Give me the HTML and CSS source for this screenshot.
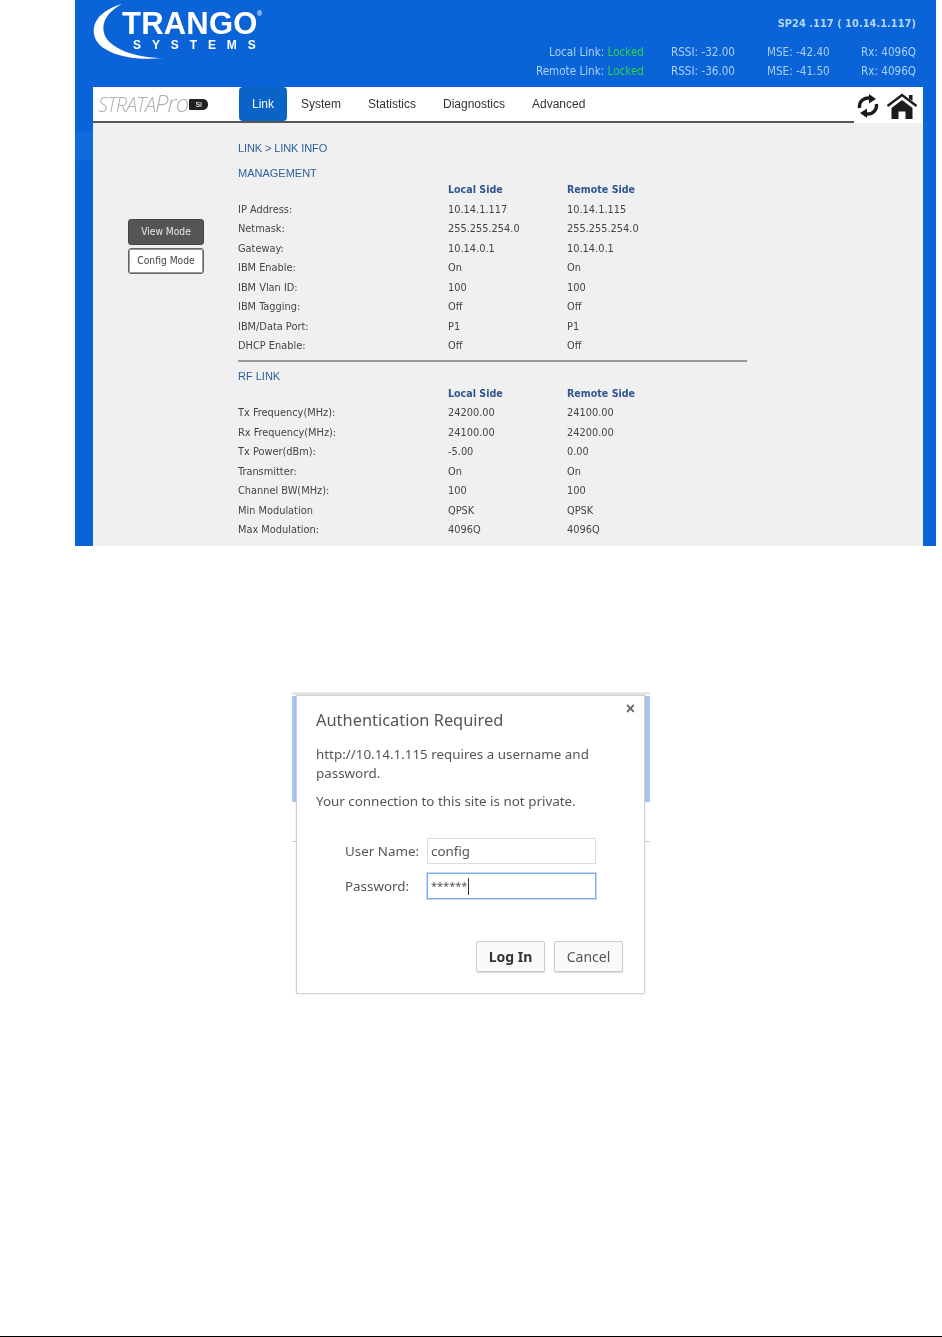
FILE: index.html
```html
<!DOCTYPE html>
<html lang="en">
<head>
<meta charset="utf-8">
<title>Trango StrataPro</title>
<link rel="stylesheet" href="styles.css">
</head>
<body>
<main class="page">
  <section class="shot">
    <header class="top">
      <div class="logo">
        <svg class="crescent" width="80" height="60" viewBox="0 0 80 60"><path d="M29 0C8 6 -1 18 1 30C3 46 30 58 70 54C42 54 15 44 11 29C8 17 16 7 29 0Z" fill="#fff"/></svg>
        <div class="trango">TRANGO<sup class="reg">®</sup></div>
        <div class="systems">SYSTEMS</div>
      </div>
      <div class="status">
        <div class="device">SP24 .117 ( 10.14.1.117)</div>
        <div class="statline">
          <span class="linkname">Local Link: <b class="locked">Locked</b></span>
          <span class="rssi">RSSI: -32.00</span>
          <span class="mse">MSE: -42.40</span>
          <span class="rx">Rx: 4096Q</span>
        </div>
        <div class="statline">
          <span class="linkname">Remote Link: <b class="locked">Locked</b></span>
          <span class="rssi">RSSI: -36.00</span>
          <span class="mse">MSE: -41.50</span>
          <span class="rx">Rx: 4096Q</span>
        </div>
      </div>
    </header>
    <div class="panel">
      <nav class="navbar">
        <div class="brand"><span class="strata">STRATA<span class="pro">Pro</span></span><span class="si">Si</span></div>
        <div class="tabs">
          <a class="tab active">Link</a>
          <a class="tab">System</a>
          <a class="tab">Statistics</a>
          <a class="tab">Diagnostics</a>
          <a class="tab">Advanced</a>
        </div>
        <div class="tools">
          <svg width="22" height="24" viewBox="0 0 22 24"><g fill="none" stroke="#1c1c1c" stroke-width="3.4"><path d="M2.6 14A8.6 8.6 0 0 1 13 4.2"/><path d="M19.4 10A8.6 8.6 0 0 1 9 19.8"/></g><path d="M12 0L19 5L12 9.5Z" fill="#1c1c1c"/><path d="M10 14.5L3 19L10 24Z" fill="#1c1c1c"/></svg>
          <svg width="32" height="28" viewBox="0 0 32 28"><path d="M1.5 14L16 3L30.5 14" fill="none" stroke="#1c1c1c" stroke-width="2.4"/><path d="M23 3H26.5V9L23 6.5Z" fill="#1c1c1c"/><path d="M5.5 16L16 8L26.5 16V27H19.5V19.5H12.5V27H5.5Z" fill="#1c1c1c"/></svg>
        </div>
      </nav>
      <div class="content">
        <aside class="modes">
          <button class="mode dark">View Mode</button>
          <button class="mode">Config Mode</button>
        </aside>
        <div class="info">
          <div class="crumb">LINK &gt; LINK INFO</div>
          <h2 class="section">MANAGEMENT</h2>
          <div class="grid">
            <span></span><b class="colhead">Local Side</b><b class="colhead">Remote Side</b>
            <span>IP Address:</span><span>10.14.1.117</span><span>10.14.1.115</span>
            <span>Netmask:</span><span>255.255.254.0</span><span>255.255.254.0</span>
            <span>Gateway:</span><span>10.14.0.1</span><span>10.14.0.1</span>
            <span>IBM Enable:</span><span>On</span><span>On</span>
            <span>IBM Vlan ID:</span><span>100</span><span>100</span>
            <span>IBM Tagging:</span><span>Off</span><span>Off</span>
            <span>IBM/Data Port:</span><span>P1</span><span>P1</span>
            <span>DHCP Enable:</span><span>Off</span><span>Off</span>
          </div>
          <hr class="rule">
          <h2 class="section rf">RF LINK</h2>
          <div class="grid">
            <span></span><b class="colhead">Local Side</b><b class="colhead">Remote Side</b>
            <span>Tx Frequency(MHz):</span><span>24200.00</span><span>24100.00</span>
            <span>Rx Frequency(MHz):</span><span>24100.00</span><span>24200.00</span>
            <span>Tx Power(dBm):</span><span>-5.00</span><span>0.00</span>
            <span>Transmitter:</span><span>On</span><span>On</span>
            <span>Channel BW(MHz):</span><span>100</span><span>100</span>
            <span>Min Modulation</span><span>QPSK</span><span>QPSK</span>
            <span>Max Modulation:</span><span>4096Q</span><span>4096Q</span>
          </div>
        </div>
      </div>
    </div>
  </section>

  <section class="backdrop">
    <div class="dialog">
      <span class="close">×</span>
      <h1 class="dtitle">Authentication Required</h1>
      <p class="dtext">http://10.14.1.115 requires a username and password.</p>
      <p class="dtext second">Your connection to this site is not private.</p>
      <div class="form">
        <label class="flabel">User Name:</label><div class="input">config</div>
        <label class="flabel">Password:</label><div class="input focus">******<i class="caret"></i></div>
      </div>
      <div class="actions">
        <button class="dbtn strong">Log In</button>
        <button class="dbtn">Cancel</button>
      </div>
    </div>
  </section>
  <div class="footline"></div>
</main>
</body>
</html>
```
FILE: styles.css
```css
* { box-sizing: border-box; }
html, body { margin: 0; padding: 0; background: #fff; }
.page { width: 942px; height: 1337px; display: flex; flex-direction: column; overflow: hidden; }

.shot {
  width: 861px; height: 546px; margin-left: 75px; padding: 0 13px 0 18px;
  background:
    linear-gradient(172deg, transparent 0 8px, #0f6adc 8px 36px, transparent 36px) 0 125px / 18px 44px no-repeat,
    #0a64d8;
  filter: blur(0.45px);
  font-family: "DejaVu Sans Condensed", "DejaVu Sans", sans-serif;
  font-stretch: condensed;
}
.top { height: 87px; display: flex; justify-content: space-between; }
.logo { position: relative; width: 180px; height: 87px; color: #fff; }
.crescent { position: absolute; left: 0; top: 4px; }
.trango {
  position: absolute; left: 29px; top: 11px;
  font: 700 31px/26px "Liberation Sans", sans-serif;
  letter-spacing: 0.2px; white-space: nowrap;
}
.reg { position: absolute; left: 135px; top: -1px; font-size: 7px; line-height: 8px; letter-spacing: 0; }
.systems {
  position: absolute; left: 40px; top: 38px;
  font: 700 12px/14px "Liberation Sans", sans-serif;
  letter-spacing: 10.9px; white-space: nowrap;
}
.status { width: 560px; padding: 17px 7px 0 0; color: #a9d0f7; font-size: 11.6px; }
.device { text-align: right; line-height: 14px; font-size: 11px; font-weight: 700; color: #b5d6f8; margin-bottom: 12px; }
.statline { display: flex; height: 19px; line-height: 19px; }
.linkname { width: 281px; text-align: right; white-space: nowrap; }
.locked { font-weight: 400; color: #2fd04a; }
.rssi { width: 96px; margin-left: 27px; white-space: nowrap; }
.mse { width: 93px; white-space: nowrap; }
.rx { flex: 1; text-align: right; white-space: nowrap; }

.panel { height: 459px; background: #f0f0f0; }
.navbar { height: 36px; background: #fff; display: flex; align-items: flex-start; }
.brand { width: 146px; height: 36px; display: flex; align-items: center; padding-left: 5px; border-bottom: 2px solid #555; }
.strata { font: italic 300 20px/24px "Open Sans", sans-serif; font-stretch: normal; color: #b0b0b0; letter-spacing: -1px; white-space: nowrap; }
.pro { font-size: 24px; }
.si { margin-left: 1px; width: 19px; height: 11px; border-radius: 1px 5px 5px 1px; background: #222; color: #ddd; font: 700 7px/11px "Liberation Sans", sans-serif; text-align: center; }
.tabs { width: 615px; height: 36px; display: flex; border-bottom: 2px solid #555; font: 400 12px/34px "Liberation Sans", sans-serif; color: #333; }
.tab { padding: 0 14px 0 13px; white-space: nowrap; }
.tab.active { width: 48px; padding: 0; margin-right: 1px; text-align: center; color: #fff; background: #0a64c8; border-radius: 4px; }
.tab:nth-child(2) { width: 67px; padding-left: 13px; }
.tab:nth-child(3) { width: 75px; padding-left: 13px; }
.tab:nth-child(4) { width: 89px; padding-left: 13px; }
.tools { display: flex; align-items: center; gap: 7px; padding: 3px 0 0 3px; height: 34px; }

.content { display: flex; }
.modes { width: 145px; padding: 96px 0 0 35px; display: flex; flex-direction: column; gap: 3px; }
.mode {
  width: 76px; height: 26px; padding: 0; border: 1px solid #666; border-radius: 3px; background: #fff;
  color: #444; font: 400 10.2px/22px "DejaVu Sans Condensed", "DejaVu Sans", sans-serif; box-shadow: inset 0 0 0 1px #999;
}
.mode.dark { background: #555; color: #e8e8e8; border-color: #444; box-shadow: none; }
.info { width: 509px; color: #444; font-size: 10.9px; }
.crumb { margin-top: 18px; height: 14px; font: 400 11px/14px "Liberation Sans", sans-serif; font-stretch: normal; color: #2c5f9c; letter-spacing: -0.1px; }
.section { margin: 11px 0 0; height: 14px; font: 400 11px/14px "Liberation Sans", sans-serif; font-stretch: normal; color: #2c5f9c; }
.section.rf { margin-top: 7px; height: 15px; }
.grid { display: grid; grid-template-columns: 210px 119px 1fr; grid-auto-rows: 19.5px; line-height: 19.5px; white-space: nowrap; }
.colhead { font-weight: 700; color: #2f5590; font-size: 10.6px; }
.rule { margin: 4px 0 0; height: 2px; border: 0; background: #999; }

.backdrop {
  width: 358px; height: 302px; margin: 146px 0 0 292px; padding: 3px 4px 0 4px;
  background:
    linear-gradient(#ccc, #ccc) 0 149px / 100% 1px no-repeat,
    linear-gradient(#a9c8f0, #a9c8f0) 0 4px / 100% 106px no-repeat,
    linear-gradient(#e8e8e8, #e8e8e8) 0 0 / 100% 3px no-repeat;
  filter: blur(0.4px);
  font-family: "Noto Sans", sans-serif;
}
.dialog {
  position: relative; width: 349px; height: 299px; padding: 0 20px 0 19px; background: #fff;
  border: 1px solid #d4d4d4; color: #555; box-shadow: 0 0 2px rgba(0,0,0,.15);
}
.close { position: absolute; right: 9px; top: 2px; font: 700 16px/22px "Liberation Sans", sans-serif; color: #666; }
.dtitle { margin: 12px 0 0; font-weight: 400; font-size: 16.4px; line-height: 24px; color: #555; }
.dtext { margin: 13px 0 0; width: 300px; font-size: 13.4px; line-height: 19px; }
.dtext.second { margin-top: 9px; }
.form { display: grid; grid-template-columns: 82px 169px; grid-template-rows: 26px 26px; row-gap: 9px; margin: 27px 0 0 29px; align-items: center; font-size: 13.4px; }
.flabel { white-space: nowrap; }
.input { height: 26px; padding: 0 3px; line-height: 24px; border: 1px solid #ddd; background: #fff; color: #555; font-size: 13.4px; display: flex; align-items: center; }
.input.focus { border-color: #7aaaf0; box-shadow: 0 0 0 1px rgba(122,170,240,.45); font-size: 11px; }
.caret { width: 1px; height: 17px; background: #333; margin-left: 1px; }
.actions { display: flex; justify-content: flex-end; gap: 9px; margin: 42px 1px 0 0; }
.dbtn { width: 69px; height: 31px; padding: 0; border: 1px solid #ccc; border-radius: 2px; background: #fafafa; color: #555; font: 400 14px/28px "Noto Sans", sans-serif; box-shadow: 0 1px 1px rgba(0,0,0,.15); }
.dbtn.strong { font-weight: 700; color: #333; }

.footline { height: 1px; background: #000; margin-top: 342px; flex: none; }
```
